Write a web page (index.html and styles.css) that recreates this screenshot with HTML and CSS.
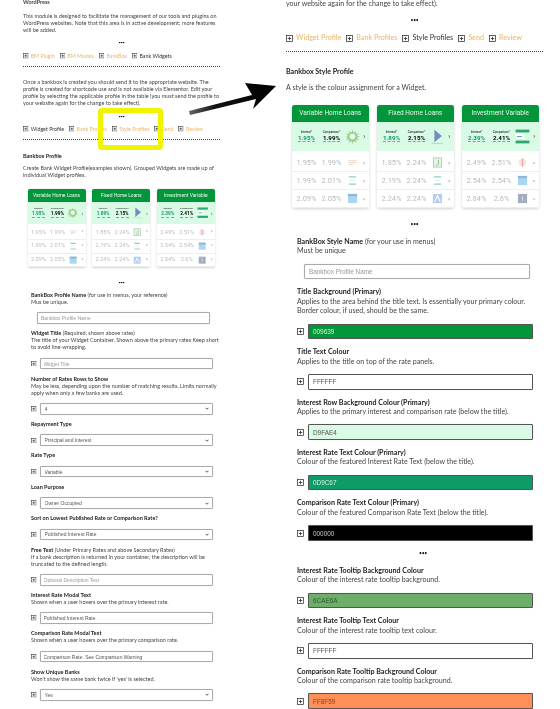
FILE: index.html
```html
<!DOCTYPE html>
<html lang="en">
<head>
<meta charset="utf-8">
<title>Bankbox Profile</title>
<link rel="stylesheet" href="styles.css">
</head>
<body>
<svg class="defs" aria-hidden="true">
  <symbol id="plus" viewBox="0 0 12 12"><rect x="1" y="1" width="10" height="10" fill="#fff" stroke="#333" stroke-width="1.3"/><path d="M3 6h6M6 3v6" stroke="#333" stroke-width="1.4"/></symbol>
  <symbol id="sun" viewBox="0 0 24 24"><path d="M12 1l2 5 4-3-1 5 5-1-3 4 5 1-5 2 3 4-5-1 1 5-4-3-2 5-2-5-4 3 1-5-5 1 3-4-5-1 5-2-3-4 5 1-1-5 4 3z" fill="#9ccf8c"/><circle cx="12" cy="12" r="4.5" fill="#eefbf2"/></symbol>
  <symbol id="tan" viewBox="0 0 24 24"><path d="M3 8h18M3 12h18M3 16h12" stroke="#e6d6c8" stroke-width="2"/></symbol>
  <symbol id="lines" viewBox="0 0 24 24"><path d="M4 4h16M4 20h16" stroke="#8fd6b8" stroke-width="3"/><path d="M6 12h10" stroke="#d5ece3" stroke-width="2"/></symbol>
  <symbol id="sky" viewBox="0 0 24 24"><rect x="2" y="2" width="20" height="20" fill="#a9d7f0"/><rect x="2" y="2" width="20" height="5" fill="#8fb7d4"/></symbol>
  <symbol id="play" viewBox="0 0 24 24"><path d="M7 1l12 10-12 10z" fill="#6f8fc0"/><path d="M3 23h18" stroke="#c3d2cc" stroke-width="1.6"/></symbol>
  <symbol id="jbox" viewBox="0 0 24 24"><rect x="3" y="2" width="18" height="20" fill="#e6f3e6" stroke="#a9cfa9" stroke-width="2"/><path d="M14 6v10a3 3 0 0 1-5 1" fill="none" stroke="#8cbd8c" stroke-width="2"/></symbol>
  <symbol id="abox" viewBox="0 0 24 24"><rect x="2" y="2" width="20" height="20" fill="#b3cdf0"/><path d="M6 19l6-13 6 13" fill="none" stroke="#fff" stroke-width="2.5"/></symbol>
  <symbol id="stripes" viewBox="0 0 24 24"><rect x="1" y="1" width="22" height="4.5" fill="#2fa66f"/><rect x="1" y="18.500" width="22" height="4.500" fill="#2fa66f"/><rect x="1" y="8" width="13" height="8" fill="#fff"/><path d="M3 12h8" stroke="#5aa0c0" stroke-width="1.600"/></symbol>
  <symbol id="pink" viewBox="0 0 24 24"><circle cx="12" cy="12" r="8" fill="#f6e2e0"/><path d="M12 3v18" stroke="#e4a5a5" stroke-width="2.500"/></symbol>
  <symbol id="slate" viewBox="0 0 24 24"><rect x="2" y="2" width="20" height="20" fill="#a4adc0"/><path d="M12 7v10" stroke="#dde" stroke-width="2"/></symbol>
</svg>

<div class="sheet">
  <main class="col col-left">
    <p class="lead strong">WordPress</p>
    <p class="intro">This module is designed to facilitate the management of our tools and plugins on WordPress websites. Note that this area is in active development; more features will be added.</p>
    <div class="dots">•••</div>
    <nav class="crumbs">
      <span class="crumb link"><svg class="ico"><use href="#plus"/></svg>BM Plugin</span>
      <span class="crumb link"><svg class="ico"><use href="#plus"/></svg>BM Modals</span>
      <span class="crumb link"><svg class="ico"><use href="#plus"/></svg>BankBox</span>
      <span class="crumb"><svg class="ico"><use href="#plus"/></svg>Bank Widgets</span>
    </nav>
    <hr class="rule">
    <p class="send-note">Once a bankbox is created you should send it to the appropriate website. The profile is created for shortcode use and is not available via Elementor. Edit your profile by selecting the applicable profile in the table (you must send the profile to your website again for the change to take effect).</p>
    <div class="dots dots-b">•••</div>
    <nav class="crumbs crumbs-b">
      <span class="crumb"><svg class="ico"><use href="#plus"/></svg>Widget Profile</span>
      <span class="crumb link"><svg class="ico"><use href="#plus"/></svg>Bank Profiles</span>
      <span class="crumb link"><svg class="ico"><use href="#plus"/></svg>Style Profiles</span>
      <span class="crumb link"><svg class="ico"><use href="#plus"/></svg>Send</span>
      <span class="crumb link"><svg class="ico"><use href="#plus"/></svg>Review</span>
    </nav>
    <hr class="rule">
    <h2 class="section">Bankbox Profile</h2>
    <p class="section-text">Create Bank Widget Profile(examples shown). Grouped Widgets are made up of individual Widget profiles.</p>

    <div class="cards">
      <section class="card">
        <h3>Variable Home Loans</h3>
        <div class="feature"><div class="rate"><small>Interest*</small><b class="green">1.95%</b></div><div class="rate"><small>Comparison*</small><b>1.99%</b></div><svg class="logo big"><use href="#sun"/></svg><i>›</i></div>
        <div class="row"><span>1.95%</span><span>1.99%</span><svg class="logo"><use href="#tan"/></svg><i>»</i></div>
        <div class="row"><span>1.99%</span><span>2.01%</span><svg class="logo"><use href="#lines"/></svg><i>»</i></div>
        <div class="row"><span>2.09%</span><span>2.05%</span><svg class="logo"><use href="#sky"/></svg><i>»</i></div>
      </section>
      <section class="card">
        <h3>Fixed Home Loans</h3>
        <div class="feature"><div class="rate"><small>Interest*</small><b class="green">1.89%</b></div><div class="rate"><small>Comparison*</small><b>2.15%</b></div><svg class="logo big"><use href="#play"/></svg><i>›</i></div>
        <div class="row"><span>1.85%</span><span>2.24%</span><svg class="logo"><use href="#jbox"/></svg><i>»</i></div>
        <div class="row"><span>2.19%</span><span>2.24%</span><svg class="logo"><use href="#lines"/></svg><i>»</i></div>
        <div class="row"><span>2.24%</span><span>2.24%</span><svg class="logo"><use href="#abox"/></svg><i>»</i></div>
      </section>
      <section class="card">
        <h3>Investment Variable</h3>
        <div class="feature"><div class="rate"><small>Interest*</small><b class="green">2.39%</b></div><div class="rate"><small>Comparison*</small><b>2.41%</b></div><svg class="logo big"><use href="#stripes"/></svg><i>›</i></div>
        <div class="row"><span>2.49%</span><span>2.51%</span><svg class="logo"><use href="#pink"/></svg><i>»</i></div>
        <div class="row"><span>2.54%</span><span>2.54%</span><svg class="logo"><use href="#sky"/></svg><i>»</i></div>
        <div class="row"><span>2.84%</span><span>2.6%</span><svg class="logo"><use href="#slate"/></svg><i>»</i></div>
      </section>
    </div>

    <div class="dots dots-c">•••</div>

    <form class="fields">
      <div class="field"><p><b>BankBox Profile Name</b> (for use in menus, your reference)<br>Mus be unique.</p>
        <div class="control no-icon"><input placeholder="Bankbox Profile Name"></div></div>
      <div class="field"><p><b>Widget Title</b> (Required, shown above rates)<br>The title of your Widget Container. Shown above the primary rates Keep short to avoid line-wrapping.</p>
        <div class="control"><svg class="ico"><use href="#plus"/></svg><input placeholder="Widget Title"></div></div>
      <div class="field"><p><b>Number of Rates Rows to Show</b><br>May be less, depending upon the number of matching results. Limits normally apply when only a few banks are used.</p>
        <div class="control"><svg class="ico"><use href="#plus"/></svg><select><option>4</option></select></div></div>
      <div class="field"><p><b>Repayment Type</b></p>
        <div class="control"><svg class="ico"><use href="#plus"/></svg><select><option>Principal and Interest</option></select></div></div>
      <div class="field"><p><b>Rate Type</b></p>
        <div class="control"><svg class="ico"><use href="#plus"/></svg><select><option>Variable</option></select></div></div>
      <div class="field"><p><b>Loan Purpose</b></p>
        <div class="control"><svg class="ico"><use href="#plus"/></svg><select><option>Owner Occupied</option></select></div></div>
      <div class="field"><p><b>Sort on Lowest Published Rate or Comparison Rate?</b></p>
        <div class="control"><svg class="ico"><use href="#plus"/></svg><select><option>Published Interest Rate</option></select></div></div>
      <div class="field"><p><b>Free Text</b> (Under Primary Rates and above Secondary Rates)<br>If a bank description is returned in your container, the description will be truncated to the defined length.</p>
        <div class="control"><svg class="ico"><use href="#plus"/></svg><input placeholder="Optional Description Text"></div></div>
      <div class="field"><p><b>Interest Rate Modal Text</b><br>Shown when a user hovers over the primary interest rate.</p>
        <div class="control"><svg class="ico"><use href="#plus"/></svg><input value="Published Interest Rate"></div></div>
      <div class="field"><p><b>Comparison Rate Modal Text</b><br>Shown when a user hovers over the primary comparison rate.</p>
        <div class="control"><svg class="ico"><use href="#plus"/></svg><input value="Comparison Rate. See Comparison Warning"></div></div>
      <div class="field"><p><b>Show Unique Banks</b><br>Won't show the same bank twice if 'yes' is selected.</p>
        <div class="control"><svg class="ico"><use href="#plus"/></svg><select><option>Yes</option></select></div></div>
    </form>
  </main>

  <main class="col col-right">
    <p class="lead">your website again for the change to take effect).</p>
    <div class="dots">•••</div>
    <nav class="crumbs">
      <span class="crumb link"><svg class="ico"><use href="#plus"/></svg>Widget Profile</span>
      <span class="crumb link"><svg class="ico"><use href="#plus"/></svg>Bank Profiles</span>
      <span class="crumb"><svg class="ico"><use href="#plus"/></svg>Style Profiles</span>
      <span class="crumb link"><svg class="ico"><use href="#plus"/></svg>Send</span>
      <span class="crumb link"><svg class="ico"><use href="#plus"/></svg>Review</span>
    </nav>
    <hr class="rule">
    <h2 class="section">Bankbox Style Profile</h2>
    <p class="section-text">A style is the colour assignment for a Widget.</p>

    <div class="cards">
      <section class="card">
        <h3>Variable Home Loans</h3>
        <div class="feature"><div class="rate"><small>Interest*</small><b class="green">1.95%</b></div><div class="rate"><small>Comparison*</small><b>1.99%</b></div><svg class="logo big"><use href="#sun"/></svg><i>›</i></div>
        <div class="row"><span>1.95%</span><span>1.99%</span><svg class="logo"><use href="#tan"/></svg><i>»</i></div>
        <div class="row"><span>1.99%</span><span>2.01%</span><svg class="logo"><use href="#lines"/></svg><i>»</i></div>
        <div class="row"><span>2.09%</span><span>2.05%</span><svg class="logo"><use href="#sky"/></svg><i>»</i></div>
      </section>
      <section class="card">
        <h3>Fixed Home Loans</h3>
        <div class="feature"><div class="rate"><small>Interest*</small><b class="green">1.89%</b></div><div class="rate"><small>Comparison*</small><b>2.15%</b></div><svg class="logo big"><use href="#play"/></svg><i>›</i></div>
        <div class="row"><span>1.85%</span><span>2.24%</span><svg class="logo"><use href="#jbox"/></svg><i>»</i></div>
        <div class="row"><span>2.19%</span><span>2.24%</span><svg class="logo"><use href="#lines"/></svg><i>»</i></div>
        <div class="row"><span>2.24%</span><span>2.24%</span><svg class="logo"><use href="#abox"/></svg><i>»</i></div>
      </section>
      <section class="card">
        <h3>Investment Variable</h3>
        <div class="feature"><div class="rate"><small>Interest*</small><b class="green">2.39%</b></div><div class="rate"><small>Comparison*</small><b>2.41%</b></div><svg class="logo big"><use href="#stripes"/></svg><i>›</i></div>
        <div class="row"><span>2.49%</span><span>2.51%</span><svg class="logo"><use href="#pink"/></svg><i>»</i></div>
        <div class="row"><span>2.54%</span><span>2.54%</span><svg class="logo"><use href="#sky"/></svg><i>»</i></div>
        <div class="row"><span>2.84%</span><span>2.6%</span><svg class="logo"><use href="#slate"/></svg><i>»</i></div>
      </section>
    </div>

    <div class="dots dots-c">•••</div>

    <form class="fields">
      <div class="field"><p><b>BankBox Style Name</b> (for your use in menus)<br>Must be unique</p>
        <div class="control no-icon"><input placeholder="Bankbox Profile Name"></div></div>
      <div class="field"><p><b>Title Background (Primary)</b><br>Applies to the area behind the title text. Is essentially your primary colour. Border colour, if used, should be the same.</p>
        <div class="control swatch"><svg class="ico"><use href="#plus"/></svg><input class="c-title" value="009639"></div></div>
      <div class="field"><p><b>Title Text Colour</b><br>Applies to the title on top of the rate panels.</p>
        <div class="control swatch"><svg class="ico"><use href="#plus"/></svg><input class="c-white" value="FFFFFF"></div></div>
      <div class="field"><p><b>Interest Row Background Colour (Primary)</b><br>Applies to the primary interest and comparison rate (below the title).</p>
        <div class="control swatch"><svg class="ico"><use href="#plus"/></svg><input class="c-mint" value="D9FAE4"></div></div>
      <div class="field"><p><b>Interest Rate Text Colour (Primary)</b><br>Colour of the featured Interest Rate Text (below the title).</p>
        <div class="control swatch"><svg class="ico"><use href="#plus"/></svg><input class="c-teal" value="0D9C67"></div></div>
      <div class="field"><p><b>Comparison Rate Text Colour (Primary)</b><br>Colour of the featured Comparison Rate Text (below the title).</p>
        <div class="control swatch"><svg class="ico"><use href="#plus"/></svg><input class="c-black" value="000000"></div></div>
      <div class="dots dots-f">•••</div>
      <div class="field"><p><b>Interest Rate Tooltip Background Colour</b><br>Colour of the interest rate tooltip background.</p>
        <div class="control swatch"><svg class="ico"><use href="#plus"/></svg><input class="c-leaf" value="6CAE6A"></div></div>
      <div class="field"><p><b>Interest Rate Tooltip Text Colour</b><br>Colour of the interest rate tooltip text colour.</p>
        <div class="control swatch"><svg class="ico"><use href="#plus"/></svg><input class="c-white" value="FFFFFF"></div></div>
      <div class="field"><p><b>Comparison Rate Tooltip Background Colour</b><br>Colour of the comparison rate tooltip background.</p>
        <div class="control swatch"><svg class="ico"><use href="#plus"/></svg><input class="c-orange" value="FF8F59"></div></div>
    </form>
  </main>

  <div class="highlight"></div>
  <svg class="arrow" viewBox="0 0 560 709">
    <defs><linearGradient id="shaft" x1="0" x2="1"><stop offset="0" stop-color="#666"/><stop offset=".3" stop-color="#111"/><stop offset="1" stop-color="#000"/></linearGradient></defs>
    <polygon points="189,111 252,95 245,83 276,86 253,109 256,99 190,115" fill="url(#shaft)"/>
  </svg>
</div>
</body>
</html>
```

FILE: styles.css
```css
* { box-sizing: border-box; }
html, body { margin: 0; height: 100%; background: #fff; }
body { overflow: hidden; font-family: "Lato", "Open Sans", sans-serif; color: #444; }
.defs { position: absolute; width: 0; height: 0; }
p, h2, h3 { margin: 0; font: inherit; }

.sheet { position: relative; display: flex; height: 709px; overflow: hidden; filter: blur(.3px); }
.col { flex: none; font-size: var(--fs); line-height: var(--lh); }

.col-left {
  --fs: 5.5px; --lh: 7px; --icon: 5.5px; --crumb: 5.3px; --gap: 6.4px; --ctl: 11.6px;
  --pad: 3px; --ctl-fs: 5px; --ind: 8px;
  width: 197px; margin-left: 23px;
}
.col-right {
  --fs: 7.1px; --lh: 9.4px; --icon: 7px; --crumb: 7.2px; --gap: 8px; --ctl: 15.6px;
  --pad: 4px; --ctl-fs: 6.4px; --ind: 11px;
  width: 257px; margin-left: 66px;
}

.strong { font-weight: 700; }
.lead { margin-top: -1.500px; }
.col-right .lead { margin-top: -.7px; }
.intro { margin-top: 7px; }

.dots { text-align: center; color: #111; font-size: 4px; height: var(--lh); line-height: var(--lh); letter-spacing: -.3px; margin-top: 5px; }
.col-right .dots { font-size: 5px; margin-top: 7.6px; }
.col-left .dots-b { margin-top: 6px; }
.col-left .dots-c { margin-top: 11.700px; }
.col-right .dots-c { margin-top: 12px; }
.col-right .dots-f { margin: 0 0 7.600px; }

.crumbs { display: flex; gap: 4.800px; margin-top: 7px; font-size: var(--crumb); color: #333; }
.col-left .crumbs-b { margin-top: 6px; }
.col-right .crumbs { margin-top: 7.6px; gap: 5px; }
.crumb { display: flex; align-items: center; gap: 2.200px; white-space: nowrap; }
.col-right .crumb { gap: 3px; }
.link { color: #ebb56c; }
.ico { width: var(--icon); height: var(--icon); flex: none; }

.rule { margin: 6.500px 0 0; border: 0; border-top: 1px dotted #444; }
.col-right .rule { margin-top: 8px; }

.send-note { margin-top: 11.500px; }
.section { margin-top: 12.500px; font-weight: 700; color: #222; }
.section-text { margin-top: 5px; }
.col-right .section { margin-top: 15.600px; }
.col-right .section-text { margin-top: 6.600px; }

/* rate cards: every size is in em so both screenshots share one component */
.cards { display: flex; gap: .85em; margin: 10.500px 0 0 4.500px; font-size: 7.6px; font-family: "Roboto", sans-serif; line-height: 1; }
.col-right .cards { font-size: 10px; margin: 12.300px 0 0 6px; }
.card { width: 7.65em; background: #fff; box-shadow: 0 .1em .3em rgba(0,0,0,.18); border-radius: .25em; }
.card h3 { font-size: .65em; height: 2.620em; line-height: 2.620em; text-align: center; background: #009639; color: #e8f6ec; border-radius: .38em .38em 0 0; }
.feature, .row { display: grid; grid-template-columns: 2.500em 2.500em 1.600em 1fr; align-items: center; justify-items: center; padding-left: .2em; }
.feature { height: 2.900em; margin-bottom: .3em; background: #d9fae4; color: #000; }
.rate { display: flex; flex-direction: column; align-items: center; gap: .15em; }
.rate small { font-size: .3em; white-space: nowrap; color: #333; font-weight: 500; }
.rate b { font-size: .62em; font-weight: 700; border-bottom: .1em dashed #999; }
.rate .green { color: #0d9c67; }
.row { height: 1.800em; color: #b9bcbc; border-bottom: 1px solid #eee; }
.row span { font-size: .74em; }
.logo { width: 1.100em; height: 1.100em; }
.logo.big { width: 1.500em; height: 1.500em; }
.feature i, .row i { font-style: normal; font-size: .6em; color: #aaa; }
.feature i { color: #555; font-size: .8em; }

.fields { margin: 6px 0 0 var(--ind); width: calc(100% - var(--ind) + 6px); }
.col-right .fields { margin-top: 7.600px; }
.field p { max-width: 192px; }
.col-right .field p { max-width: 232px; }
.field p b { color: #222; }
.control { display: flex; align-items: center; gap: 3px; height: var(--ctl); margin: var(--gap) 0; }
.col-right .control { gap: 4px; }
.control input, .control select {
  width: 173px; height: 100%; padding: 0 var(--pad); font-family: "Liberation Sans", sans-serif; font-size: var(--ctl-fs); color: #555;
  background: #fff; border: 1px solid #aaa; border-radius: 1px; box-shadow: 0 0 1px rgba(0,0,0,.2);
}
.control select {
  appearance: none; padding: 0 0 0 calc(var(--pad) + 1px);
  background: #fff url("data:image/svg+xml,%3Csvg xmlns='http://www.w3.org/2000/svg' viewBox='0 0 8 6'%3E%3Cpath d='M1 1.500l3 3 3-3' fill='none' stroke='%23222' stroke-width='1.500'/%3E%3C/svg%3E") no-repeat right 3px center / 4px 3px;
}
.control input::placeholder { color: #999; }
.no-icon { margin-left: 6px; }
.col-right .control input { width: 225px; }
.col-right .no-icon { margin-left: 7px; }
.col-right .no-icon input { width: 226px; }
.swatch input { border-color: #555; color: #555; }
.control .c-title { background: #009639; color: #d9f3e0; }
.control .c-mint { background: #d9fae4; }
.control .c-teal { background: #0d9c67; color: #d9f3e0; }
.control .c-black { background: #000; color: #ccc; }
.control .c-leaf { background: #6cae6a; color: #2b5a2b; }
.control .c-orange { background: #ff8f59; color: #9a3a10; }

.highlight { position: absolute; left: 98px; top: 108px; width: 65px; height: 42px; border: 5px solid #f1f400; border-radius: 4px; }
.arrow { position: absolute; inset: 0; width: 560px; height: 709px; pointer-events: none; }
```
